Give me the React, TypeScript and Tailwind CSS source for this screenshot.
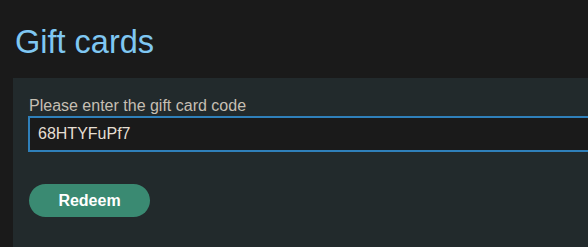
export default function App() {
  return (
    <div className="min-h-[247px] bg-[#1a1a1a] pl-[13px] pt-[22px] overflow-hidden" style={{ fontFamily: '"Liberation Sans", Arial, sans-serif' }}>
      <h1 className="text-[32.5px] leading-[40px] text-[#7fc7f2] pl-[2px]">Gift cards</h1>
      <div className="mt-4 bg-[#222a2c] pl-[15px] pt-[18px] pb-[30px] w-[800px]">
        <label className="block text-[16px] leading-[20px] text-[#c6bfb3] pl-px">Please enter the gift card code</label>
        <input
          className="block w-[700px] h-[36px] border-2 border-[#2f80ba] bg-[#1a1a1a] text-[#e6dfd3] text-[16px] pl-[8px] outline-none"
          defaultValue="68HTYFuPf7"
        />
        <button className="mt-[32px] ml-px w-[121px] h-[33px] rounded-full bg-[#3a8a72] text-white font-bold text-[16px]">Redeem</button>
      </div>
    </div>
  );
}
